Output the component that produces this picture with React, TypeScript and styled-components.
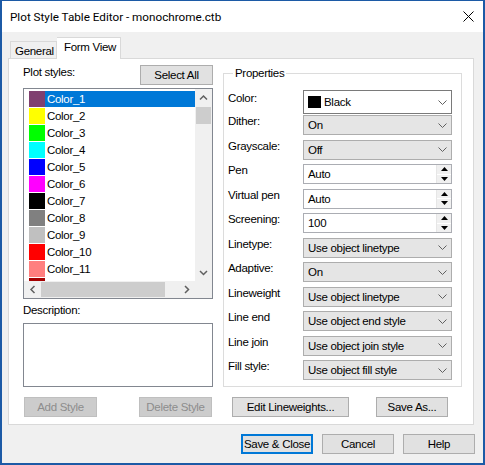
import React from "react";
import styled, { createGlobalStyle, css } from "styled-components";

const GlobalStyle = createGlobalStyle`
  html, body { margin: 0; padding: 0; background: #ffffff; }
  * { box-sizing: border-box; }
`;

///// DATA
const plotStyles = [
  { name: "Color_1", color: "#804070" },
  { name: "Color_2", color: "#ffff00" },
  { name: "Color_3", color: "#00ff00" },
  { name: "Color_4", color: "#00ffff" },
  { name: "Color_5", color: "#0000ff" },
  { name: "Color_6", color: "#ff00ff" },
  { name: "Color_7", color: "#000000" },
  { name: "Color_8", color: "#808080" },
  { name: "Color_9", color: "#c0c0c0" },
  { name: "Color_10", color: "#ff0000" },
  { name: "Color_11", color: "#ff7f7f" },
];

// the next row is only a sliver at the bottom of the list, its label is below the fold
const partialStyleColor = "#a50000";

type Prop = { label: string; value: string; kind: "color" | "combo" | "spin" };

const properties: Prop[] = [
  { label: "Color:", value: "Black", kind: "color" },
  { label: "Dither:", value: "On", kind: "combo" },
  { label: "Grayscale:", value: "Off", kind: "combo" },
  { label: "Pen", value: "Auto", kind: "spin" },
  { label: "Virtual pen", value: "Auto", kind: "spin" },
  { label: "Screening:", value: "100", kind: "spin" },
  { label: "Linetype:", value: "Use object linetype", kind: "combo" },
  { label: "Adaptive:", value: "On", kind: "combo" },
  { label: "Lineweight", value: "Use object linetype", kind: "combo" },
  { label: "Line end", value: "Use object end style", kind: "combo" },
  { label: "Line join", value: "Use object join style", kind: "combo" },
  { label: "Fill style:", value: "Use object fill style", kind: "combo" },
];

///// WINDOW
const Window = styled.div`
  width: 485px;
  height: 465px;
  border: 2px solid #1c5aa6;
  border-top-width: 1px;
  background: #f0f0f0;
  display: flex;
  flex-direction: column;
  font-family: "Liberation Sans", Arial, sans-serif;
  font-size: 11.5px;
  letter-spacing: -0.3px;
  color: #000;
  overflow: hidden;
`;

const TitleBar = styled.div`
  height: 31px;
  flex: none;
  background: #ffffff;
  display: flex;
  align-items: center;
  justify-content: space-between;
  padding: 0 9px 0 8px;
  font-family: Roboto, "Liberation Sans", sans-serif;
  font-size: 11.7px;
  letter-spacing: 0;
`;

const Body = styled.div`
  flex: 1;
  display: flex;
  flex-direction: column;
  padding: 5px 9px 0 6px;
`;

///// TABS
const TabStrip = styled.div`
  height: 21px;
  display: flex;
  align-items: flex-end;
  padding-left: 2px;
  position: relative;
  z-index: 1;
`;

const Tab = styled.div<{ $active?: boolean }>`
  border: 1px solid #d9d9d9;
  border-bottom: none;
  display: flex;
  align-items: center;
  ${p =>
    p.$active
      ? css`
          width: 64px;
          height: 22px;
          margin-bottom: -1px;
          background: #ffffff;
          padding: 0 0 3px 7px;
          border-left: none;
        `
      : css`
          width: 47px;
          height: 17px;
          background: #f0f0f0;
          padding: 1px 0 0 4px;
        `}
`;

const TabPage = styled.div`
  height: 367px;
  border: 1px solid #d9d9d9;
  background: #ffffff;
  padding: 6px 10px 0 14px;
  display: flex;
  flex-direction: column;
`;

const Columns = styled.div`
  display: grid;
  grid-template-columns: 190px 239px;
  column-gap: 10px;
`;

///// LEFT COLUMN
const LeftColumn = styled.div`
  display: flex;
  flex-direction: column;
`;

const ListHeader = styled.div`
  height: 20px;
  display: flex;
  justify-content: space-between;
  align-items: flex-start;
`;

const Caption = styled.div`
  line-height: 14px;
`;

const Button = styled.div<{ $width: number; $disabled?: boolean; $default?: boolean }>`
  width: ${p => p.$width}px;
  height: 20px;
  display: flex;
  align-items: center;
  justify-content: center;
  background: #e1e1e1;
  border: 1px solid #adadad;
  ${p =>
    p.$disabled &&
    css`
      background: #cccccc;
      border-color: #bfbfbf;
      color: #8d8d8d;
    `}
  ${p =>
    p.$default &&
    css`
      border-color: #0078d7;
      box-shadow: inset 0 0 0 1px #0078d7;
    `}
`;

const ListBox = styled.div`
  margin-top: 3px;
  width: 190px;
  height: 211px;
  border: 1px solid #828790;
  display: grid;
  grid-template-columns: 1fr 17px;
  grid-template-rows: 1fr 17px;
`;

const Items = styled.div`
  overflow: hidden;
  padding-top: 2px;
`;

const Item = styled.div`
  height: 17px;
  display: flex;
  align-items: flex-start;
`;

const Swatch = styled.div<{ $color: string }>`
  width: 16px;
  height: 16px;
  margin-left: 5px;
  background: ${p => p.$color};
`;

const ItemLabel = styled.div<{ $selected?: boolean }>`
  flex: 1;
  height: 16px;
  line-height: 16px;
  padding-left: 2px;
  ${p =>
    p.$selected &&
    css`
      background: #0078d7;
      color: #ffffff;
    `}
`;

const VScroll = styled.div`
  background: #f0f0f0;
  display: flex;
  flex-direction: column;
`;

const HScroll = styled.div`
  background: #f0f0f0;
  display: flex;
`;

const ScrollArrow = styled.div`
  width: 17px;
  height: 17px;
  flex: none;
  display: flex;
  align-items: center;
  justify-content: center;
`;

const VTrack = styled.div`
  flex: 1;
  padding: 1px 1px;
`;

const VThumb = styled.div`
  height: 17px;
  background: #cdcdcd;
`;

const HTrack = styled.div`
  flex: 1;
  padding: 1px 0;
`;

const HThumb = styled.div`
  width: 124px;
  height: 100%;
  background: #cdcdcd;
`;

const Corner = styled.div`
  background: #f0f0f0;
`;

const DescLabel = styled(Caption)`
  margin: 4px 0 6px;
`;

const DescBox = styled.div`
  height: 64px;
  border: 1px solid #828790;
  background: #ffffff;
`;

///// RIGHT COLUMN
const Group = styled.fieldset`
  margin: 1px 0 0 0;
  padding: 10px 9px 5px 4px;
  border: 1px solid #dcdcdc;
  min-width: 0;
`;

const Legend = styled.legend`
  padding: 0 2px;
  margin-left: 5px;
  line-height: 14px;
`;

const PropList = styled.div`
  display: flex;
  flex-direction: column;
  gap: 4.5px;
`;

const PropRow = styled.div<{ $tall?: boolean }>`
  height: ${p => (p.$tall ? 24 : 20)}px;
  display: flex;
  align-items: center;
  ${p => p.$tall && "margin-bottom: -3.5px;"}
`;

const PropLabel = styled.div`
  width: 75px;
  padding-bottom: 8px;
`;

const Field = styled.div<{ $kind: "color" | "combo" | "spin" }>`
  width: 149px;
  height: 100%;
  display: flex;
  align-items: center;
  padding-left: 4px;
  border: 1px solid ${p => (p.$kind === "combo" ? "#adadad" : "#7a7a7a")};
  background: ${p => (p.$kind === "combo" ? "#e5e5e5" : "#ffffff")};
  ${p => p.$kind === "spin" && "border-color: #abadb3;"}
`;

const FieldText = styled.div`
  flex: 1;
  white-space: nowrap;
`;

const ColorChip = styled.div`
  width: 13px;
  height: 12px;
  background: #000;
  margin-right: 3px;
`;

const Chevron = styled.div`
  width: 16px;
  display: flex;
  justify-content: center;
  margin-right: 1px;
`;

const Spinner = styled.div`
  width: 15px;
  height: 100%;
  display: flex;
  flex-direction: column;
  border-left: 1px solid #e6e6e6;
`;

const SpinHalf = styled.div`
  flex: 1;
  display: flex;
  align-items: center;
  justify-content: center;
  background: #f0f0f0;
  & + & {
    border-top: 1px solid #ffffff;
  }
`;

///// BOTTOM ROWS
const PageButtons = styled.div`
  margin-top: 10px;
  display: grid;
  grid-template-columns: 190px 239px;
  column-gap: 10px;
`;

const ButtonPair = styled.div<{ $pad: string }>`
  display: flex;
  justify-content: space-between;
  padding: ${p => p.$pad};
`;

const Footer = styled.div`
  margin-top: 9px;
  margin-right: -1px;
  display: flex;
  justify-content: flex-end;
  gap: 9px;
`;

///// ICONS
const ChevronDown = () => (
  <svg width="9" height="5" viewBox="0 0 9 5">
    <path d="M0.5 0.5 L4.5 4.5 L8.5 0.5" fill="none" stroke="#606060" strokeWidth="1" />
  </svg>
);

const ScrollChevron = ({ dir }: { dir: "up" | "down" | "left" | "right" }) => {
  const d = {
    up: "M1 5.5 L4.5 2 L8 5.5",
    down: "M1 2 L4.5 5.5 L8 2",
    left: "M5.5 1 L2 4.5 L5.5 8",
    right: "M2 1 L5.5 4.5 L2 8",
  }[dir];
  const vertical = dir === "up" || dir === "down";
  return (
    <svg width={vertical ? 9 : 8} height={vertical ? 8 : 9} viewBox={vertical ? "0 0 9 8" : "0 0 8 9"}>
      <path d={d} fill="none" stroke="#606060" strokeWidth="1.5" />
    </svg>
  );
};

const SpinTriangle = ({ up }: { up?: boolean }) => (
  <svg width="7" height="4" viewBox="0 0 7 4">
    <path d={up ? "M0 4 L3.5 0 L7 4 Z" : "M0 0 L3.5 4 L7 0 Z"} fill="#000" />
  </svg>
);

const CloseIcon = () => (
  <svg width="11" height="11" viewBox="0 0 11 11">
    <path d="M0.5 0.5 L10.5 10.5 M10.5 0.5 L0.5 10.5" stroke="#000" strokeWidth="1" />
  </svg>
);

///// PARTS
const PropertyField = ({ prop }: { prop: Prop }) => (
  <Field $kind={prop.kind}>
    {prop.kind === "color" && <ColorChip />}
    <FieldText>{prop.value}</FieldText>
    {prop.kind === "spin" ? (
      <Spinner>
        <SpinHalf>
          <SpinTriangle up />
        </SpinHalf>
        <SpinHalf>
          <SpinTriangle />
        </SpinHalf>
      </Spinner>
    ) : (
      <Chevron>
        <ChevronDown />
      </Chevron>
    )}
  </Field>
);

export default function App() {
  return (
    <>
      <GlobalStyle />
      <Window>
        <TitleBar>
          <span>Plot Style Table Editor - monochrome.ctb</span>
          <CloseIcon />
        </TitleBar>
        <Body>
          <TabStrip>
            <Tab>General</Tab>
            <Tab $active>Form View</Tab>
          </TabStrip>
          <TabPage>
            <Columns>
              <LeftColumn>
                <ListHeader>
                  <Caption>Plot styles:</Caption>
                  <Button $width={73}>Select All</Button>
                </ListHeader>
                <ListBox>
                  <Items>
                    {plotStyles.map((s, i) => (
                      <Item key={s.name}>
                        <Swatch $color={s.color} />
                        <ItemLabel $selected={i === 0}>{s.name}</ItemLabel>
                      </Item>
                    ))}
                    <Item>
                      <Swatch $color={partialStyleColor} />
                    </Item>
                  </Items>
                  <VScroll>
                    <ScrollArrow>
                      <ScrollChevron dir="up" />
                    </ScrollArrow>
                    <VTrack>
                      <VThumb />
                    </VTrack>
                    <ScrollArrow>
                      <ScrollChevron dir="down" />
                    </ScrollArrow>
                  </VScroll>
                  <HScroll>
                    <ScrollArrow>
                      <ScrollChevron dir="left" />
                    </ScrollArrow>
                    <HTrack>
                      <HThumb />
                    </HTrack>
                    <ScrollArrow>
                      <ScrollChevron dir="right" />
                    </ScrollArrow>
                  </HScroll>
                  <Corner />
                </ListBox>
                <DescLabel>Description:</DescLabel>
                <DescBox />
              </LeftColumn>
              <Group>
                <Legend>Properties</Legend>
                <PropList>
                  {properties.map(p => (
                    <PropRow key={p.label} $tall={p.kind === "color"}>
                      <PropLabel>{p.label}</PropLabel>
                      <PropertyField prop={p} />
                    </PropRow>
                  ))}
                </PropList>
              </Group>
            </Columns>
            <PageButtons>
              <ButtonPair $pad="0 1px">
                <Button $width={73} $disabled>Add Style</Button>
                <Button $width={73} $disabled>Delete Style</Button>
              </ButtonPair>
              <ButtonPair $pad="0 14px 0 9px">
                <Button $width={117}>Edit Lineweights...</Button>
                <Button $width={72}>Save As...</Button>
              </ButtonPair>
            </PageButtons>
          </TabPage>
          <Footer>
            <Button $width={72} $default>Save &amp; Close</Button>
            <Button $width={72}>Cancel</Button>
            <Button $width={72}>Help</Button>
          </Footer>
        </Body>
      </Window>
    </>
  );
}
